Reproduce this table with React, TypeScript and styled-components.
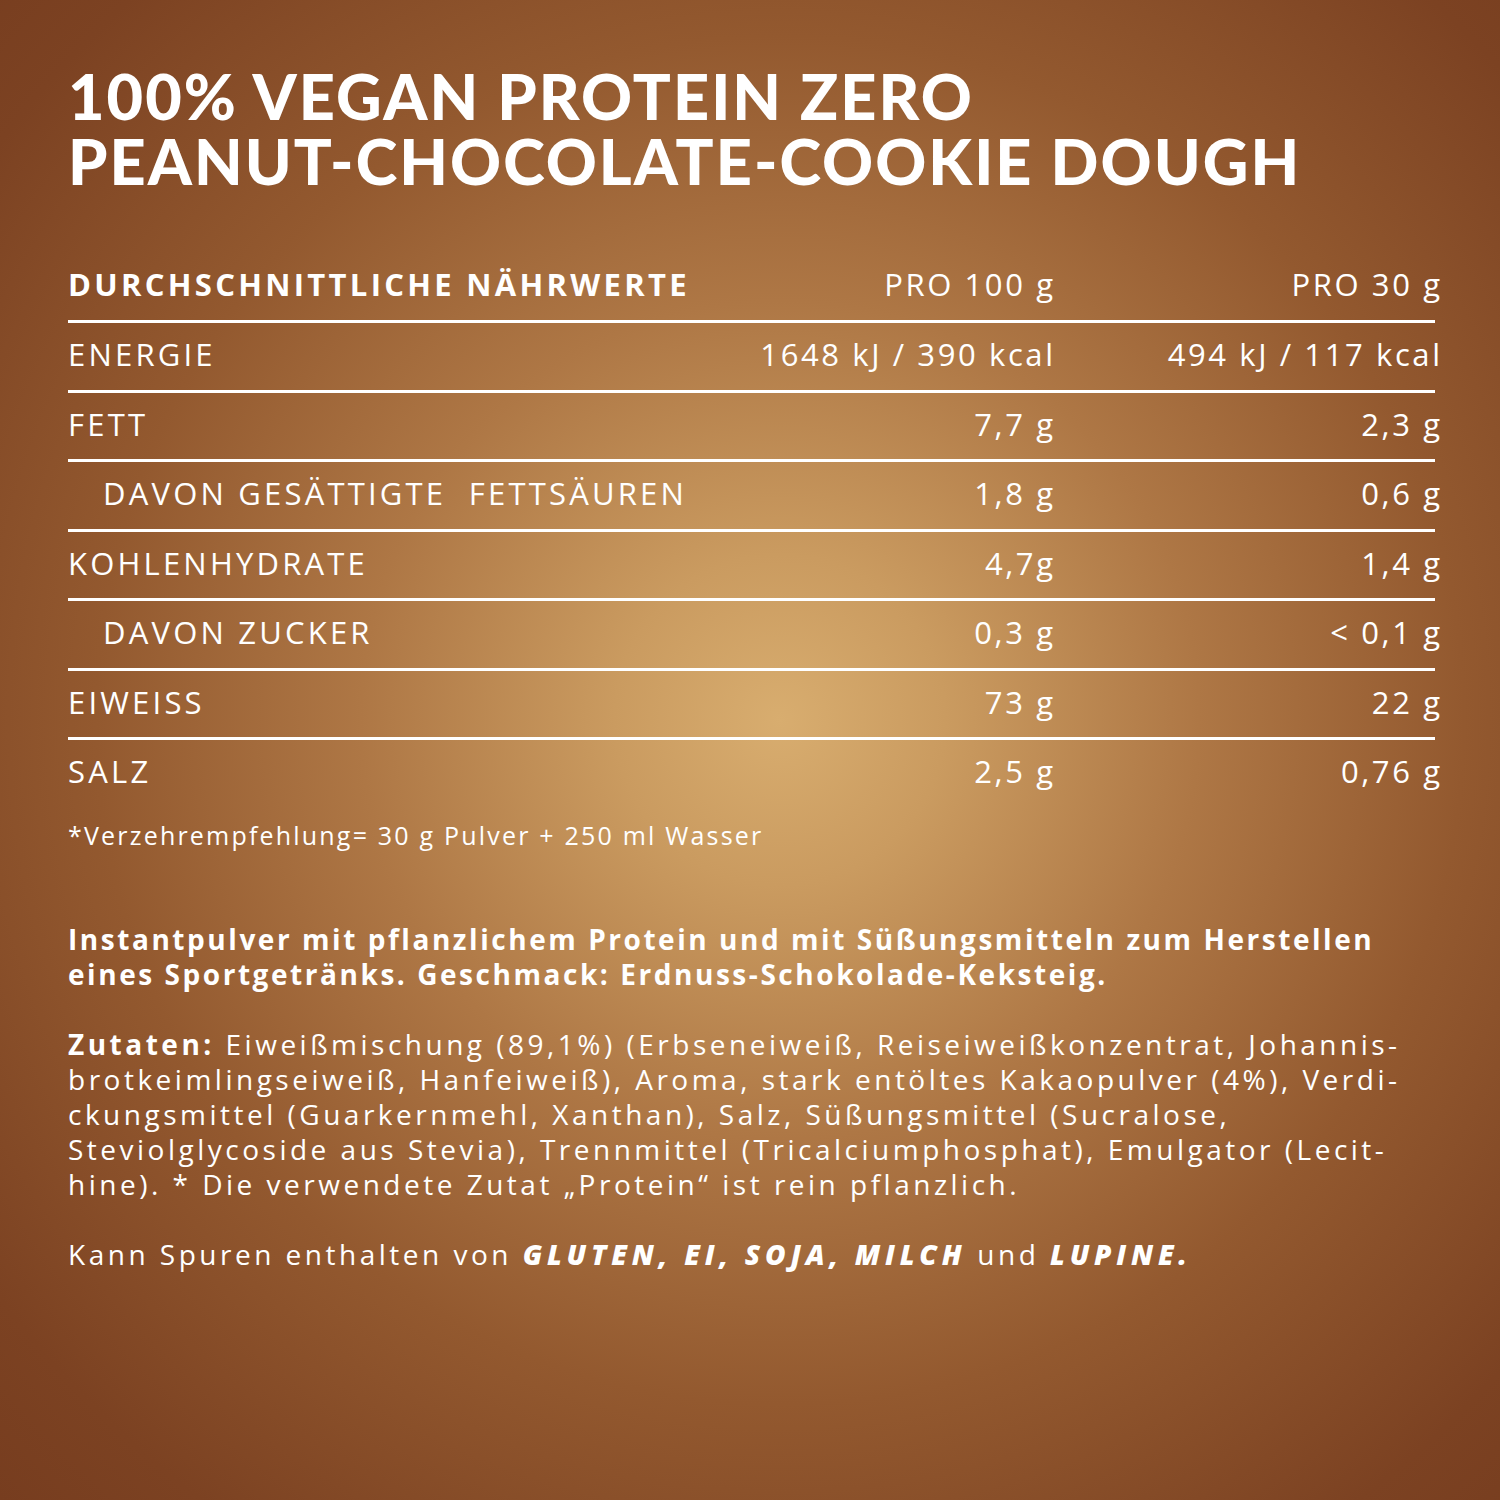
import React from "react";
import styled, { createGlobalStyle } from "styled-components";

const Global = createGlobalStyle`
  html, body { margin: 0; padding: 0; }
  body { font-family: "Open Sans", "Liberation Sans", sans-serif; }
`;

const Page = styled.div`
  width: 1500px;
  height: 1500px;
  box-sizing: border-box;
  padding: 63px 65px 0 68px;
  color: #ffffff;
  background: radial-gradient(
    circle farthest-corner at 52% 48%,
    #d8ad6f 0%,
    #ca9b60 15%,
    #ae7745 38%,
    #93592f 62%,
    #7c4222 88%,
    #773d1f 100%
  );
  overflow: hidden;
`;

const Title = styled.h1`
  margin: 0;
  font-family: "Lato", sans-serif;
  font-weight: 900;
  font-size: 63px;
  line-height: 65px;
  letter-spacing: 2.05px;
  white-space: nowrap;
`;

const Table = styled.div`
  margin-top: 69px;
  width: 1367px;
  display: flex;
  flex-direction: column;
`;

const Row = styled.div<{ $last?: boolean; $head?: boolean }>`
  display: grid;
  grid-template-columns: 1fr 360px 382px;
  align-items: center;
  box-sizing: content-box;
  height: ${(p) => (p.$head ? "44px" : "62.5px")};
  padding-bottom: ${(p) => (p.$head ? "14px" : "4px")};
  border-bottom: ${(p) => (p.$last ? "none" : "3px solid #ffffff")};
  font-size: 31px;
  font-weight: 500;
`;

const Label = styled.div<{ $indent?: boolean; $head?: boolean }>`
  padding-left: ${(p) => (p.$indent ? "35px" : "0")};
  white-space: pre;
  font-weight: ${(p) => (p.$head ? 700 : 500)};
  letter-spacing: ${(p) => (p.$head ? "3.3px" : "3.2px")};
`;

const Value = styled.div<{ $end?: boolean }>`
  text-align: right;
  white-space: nowrap;
  letter-spacing: 2.6px;
  margin-right: ${(p) => (p.$end ? "-7.6px" : "-2.6px")};
`;

const Footnote = styled.p`
  margin: 11px 0 0;
  font-size: 25px;
  font-weight: 500;
  letter-spacing: 2.2px;
`;

const Texts = styled.div`
  margin-top: 70px;
  display: flex;
  flex-direction: column;
  gap: 35px;
`;

const Paragraph = styled.p<{ $bold?: boolean }>`
  margin: 0;
  font-size: 28px;
  line-height: 35px;
  font-weight: ${(p) => (p.$bold ? 700 : 500)};
  letter-spacing: ${(p) => (p.$bold ? "2.55px" : "3.5px")};
  white-space: nowrap;
`;

const Strong = styled.strong`
  font-weight: 700;
`;

const Allergen = styled.em`
  font-weight: 800;
  font-style: italic;
  letter-spacing: 4.8px;
`;

type Nutrient = { label: string; a: string; b: string; indent?: boolean };

const rows: Nutrient[] = [
  { label: "ENERGIE", a: "1648 kJ / 390 kcal", b: "494 kJ / 117 kcal" },
  { label: "FETT", a: "7,7 g", b: "2,3 g" },
  { label: "DAVON GESÄTTIGTE  FETTSÄUREN", a: "1,8 g", b: "0,6 g", indent: true },
  { label: "KOHLENHYDRATE", a: "4,7g", b: "1,4 g" },
  { label: "DAVON ZUCKER", a: "0,3 g", b: "< 0,1 g", indent: true },
  { label: "EIWEISS", a: "73 g", b: "22 g" },
  { label: "SALZ", a: "2,5 g", b: "0,76 g" },
];

export default function App() {
  return (
    <Page>
      <Global />
      <Title>
        100% VEGAN PROTEIN ZERO
        <br />
        PEANUT-CHOCOLATE-COOKIE DOUGH
      </Title>

      <Table>
        <Row $head>
          <Label $head>DURCHSCHNITTLICHE NÄHRWERTE</Label>
          <Value>PRO 100 g</Value>
          <Value $end>PRO 30 g</Value>
        </Row>
        {rows.map((r, i) => (
          <Row key={r.label} $last={i === rows.length - 1}>
            <Label $indent={r.indent}>{r.label}</Label>
            <Value>{r.a}</Value>
            <Value $end>{r.b}</Value>
          </Row>
        ))}
      </Table>

      <Footnote>*Verzehrempfehlung= 30 g Pulver + 250 ml Wasser</Footnote>

      <Texts>
        <Paragraph $bold>
          Instantpulver mit pflanzlichem Protein und mit Süßungsmitteln zum Herstellen
          <br />
          eines Sportgetränks. Geschmack: Erdnuss-Schokolade-Keksteig.
        </Paragraph>
        <Paragraph>
          <Strong>Zutaten:</Strong> Eiweißmischung (89,1%) (Erbseneiweiß, Reiseiweißkonzentrat, Johannis-
          <br />
          brotkeimlingseiweiß, Hanfeiweiß), Aroma, stark entöltes Kakaopulver (4%), Verdi-
          <br />
          ckungsmittel (Guarkernmehl, Xanthan), Salz, Süßungsmittel (Sucralose,
          <br />
          Steviolglycoside aus Stevia), Trennmittel (Tricalciumphosphat), Emulgator (Lecit-
          <br />
          hine). * Die verwendete Zutat „Protein“ ist rein pflanzlich.
        </Paragraph>
        <Paragraph>
          Kann Spuren enthalten von <Allergen>GLUTEN, EI, SOJA, MILCH</Allergen> und{" "}
          <Allergen>LUPINE.</Allergen>
        </Paragraph>
      </Texts>
    </Page>
  );
}
